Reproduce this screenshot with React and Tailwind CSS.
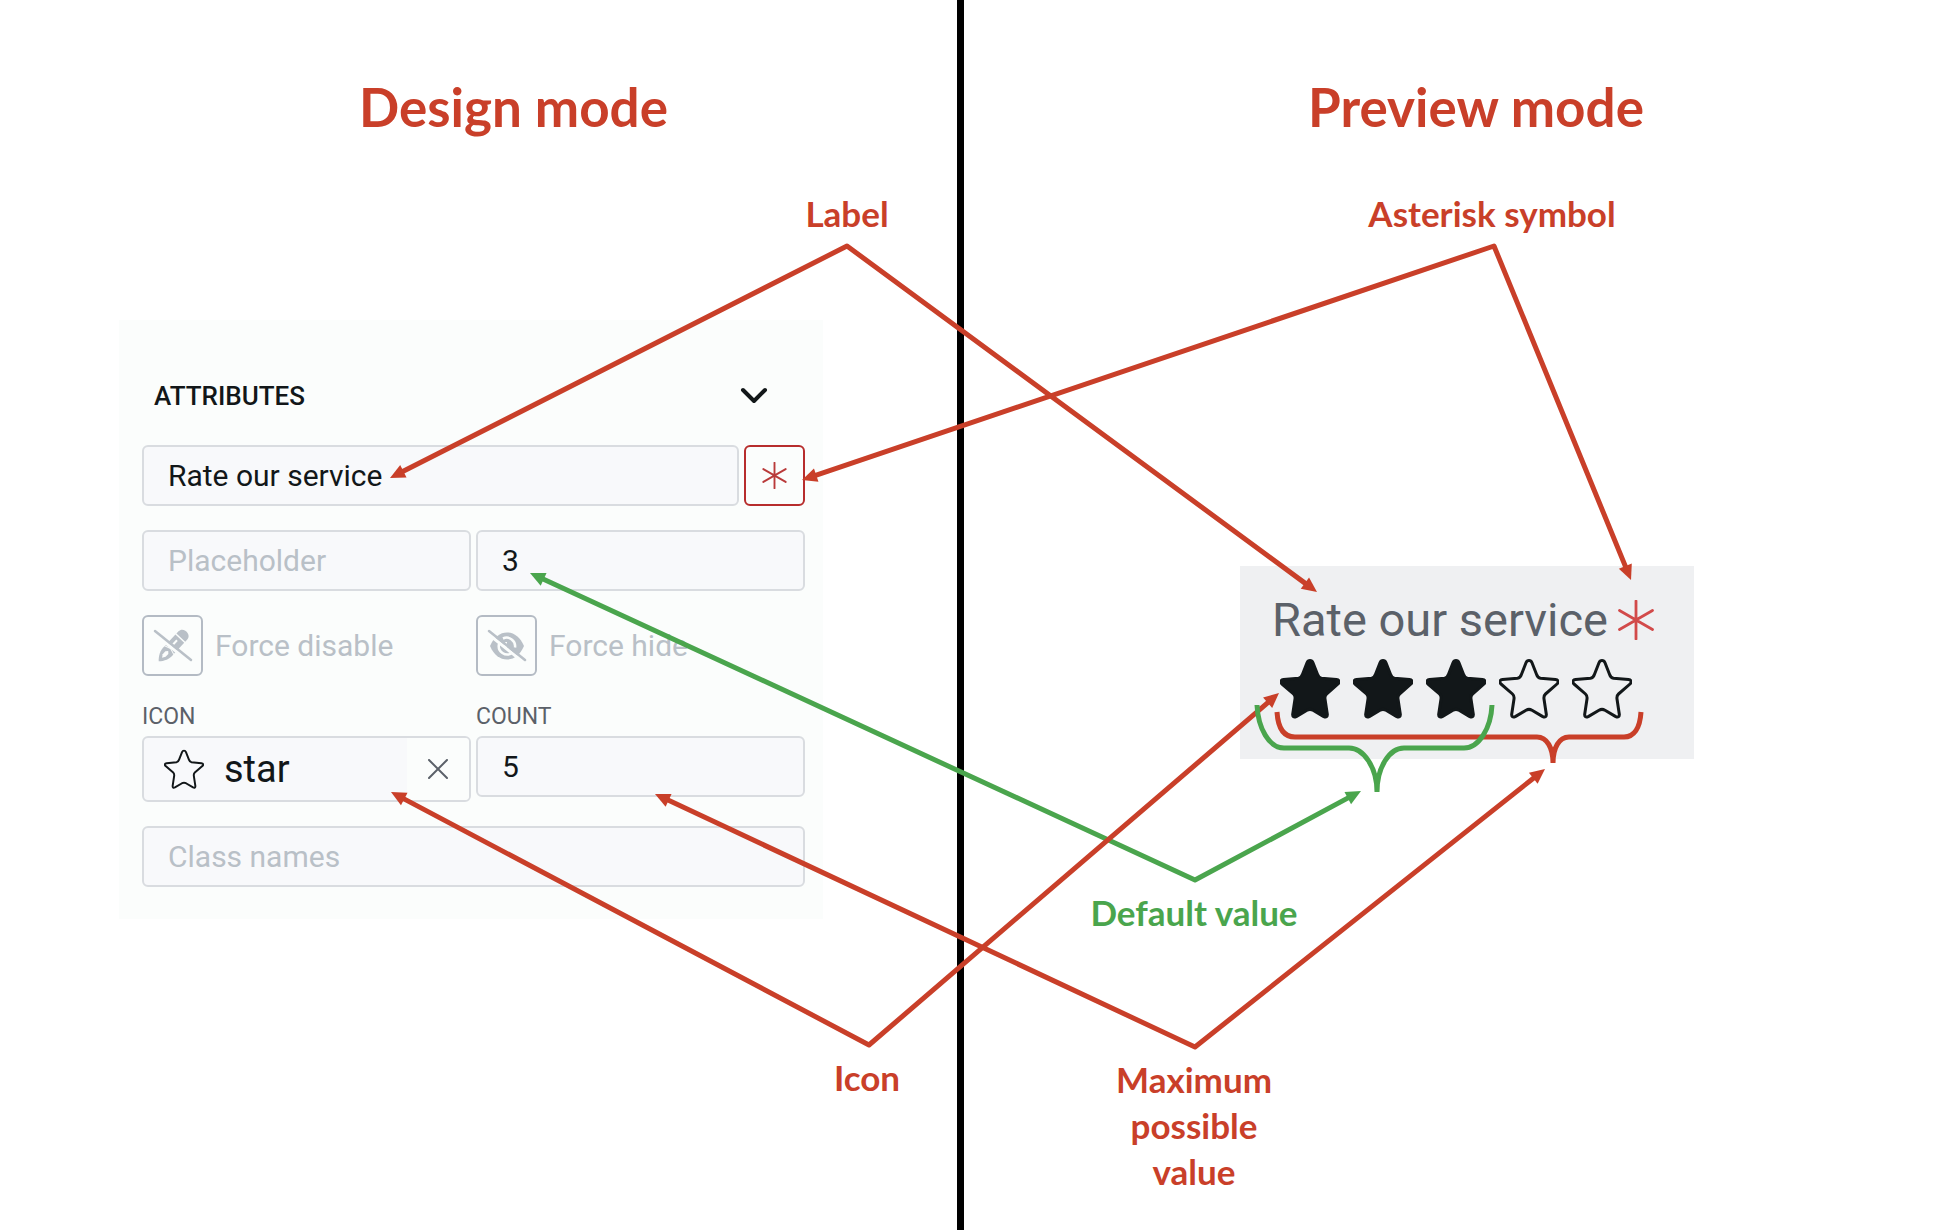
import React from 'react';

const RED = '#c93f29';
const GREEN = '#4aa54d';

const STAR =
  'M30 2.500C31.500 2.500 32.400 3.300 33 4.800L37.500 16.200C38.300 18.600 39.200 19.800 41.500 20.200L56.500 21.600C59.500 22 60 24.200 58 26L46.500 36C44.800 37.500 44.700 38.800 45 41L47.300 56.200C47.600 59 46 59.600 43.800 58.600L33 52.200C30.800 51 29.200 51 27 52.200L16.200 58.600C14 59.600 12.400 59 12.700 56.200L15 41C15.300 38.800 15.200 37.500 13.500 36L2 26C0 24.200 .5 22 3.500 21.600L18.500 20.200C20.800 19.800 21.700 18.600 22.500 16.200L27 4.800C27.600 3.300 28.500 2.500 30 2.500Z';

function Star({ filled = false, className }) {
  return (
    <svg
      viewBox="0 0 60 61"
      className={className}
      fill={filled ? '#121719' : 'none'}
      stroke="#121719"
      strokeWidth="3"
      strokeLinejoin="round"
      aria-hidden="true"
    >
      <path d={STAR} />
    </svg>
  );
}

function Asterisk({ className, weight }) {
  return (
    <svg viewBox="0 0 40 40" className={className} fill="none" stroke="currentColor" strokeWidth={weight} strokeLinecap="round" aria-hidden="true">
      <path d="M20 1v38M3.500 10.500l33 19M36.500 10.500l-33 19" />
    </svg>
  );
}

function PencilSlash() {
  return (
    <svg viewBox="0 0 40 40" className="size-10" aria-hidden="true">
      <g transform="translate(20 20) rotate(43)" fill="#b9c0c7">
        <path d="M-6-11.500v-3c0-7 12-7 12 0v3z" />
        <path d="M-6-10h12V5L0 3l-6 2z" />
        <path d="M-6 6l6-2 6 2c.5 6-2 11-6 15-4-4-6.500-9-6-15z" />
        <path d="M-2-7h2v8h-2z" fill="#fbfdfc" />
        <path d="M-2 9l2-2 2 2v4l-2 3-2-3z" fill="#fbfdfc" />
      </g>
      <path d="M3 9l32 26" stroke="#fbfdfc" strokeWidth="3" />
      <path d="M2 5l36 29" stroke="#b9c0c7" strokeWidth="2.500" strokeLinecap="round" />
    </svg>
  );
}

function EyeSlash() {
  return (
    <svg viewBox="0 0 40 40" className="size-10" aria-hidden="true">
      <path d="M3 20C7 11 13 6.500 20 6.500S33 11 37 20c-4 9-10 13.500-17 13.500S7 29 3 20z" fill="#b9c0c7" />
      <path d="M16 12.500a8.500 8.500 0 0 1 12 9M25 27a8.500 8.500 0 0 1-13-9" fill="none" stroke="#fbfdfc" strokeWidth="2.500" />
      <path d="M19 16v4h-4" fill="none" stroke="#fbfdfc" strokeWidth="2" />
      <path d="M0 7l36 29" stroke="#fbfdfc" strokeWidth="3" />
      <path d="M2 5l36 29" stroke="#b9c0c7" strokeWidth="2.500" strokeLinecap="round" />
    </svg>
  );
}

const FIELD =
  'w-full min-w-0 rounded-md border-2 border-[#d9dce0] bg-[#f8f9fb] px-6 text-[30px] text-[#121719] placeholder:text-[#b9c0c7] outline-none';

function AttributesPanel() {
  return (
    <form className="ml-[119px] w-[704px] bg-[#fbfdfc] pt-[54px] pr-[18px] pb-8 pl-[23px] font-[Roboto,sans-serif] text-[30px]">
      <div className="mb-[27px] flex h-11 items-center justify-between pr-[37px] pl-3">
        <h2 className="text-[26px] font-medium text-[#121719]">ATTRIBUTES</h2>
        <button type="button" aria-label="Collapse attributes">
          <svg viewBox="0 0 28 18" className="h-[18px] w-7" fill="none" stroke="#121719" strokeWidth="4" strokeLinecap="round" strokeLinejoin="round" aria-hidden="true">
            <path d="M3 3l11 11L25 3" />
          </svg>
        </button>
      </div>

      <div className="mb-6 flex gap-[5px]">
        <input aria-label="Label" defaultValue="Rate our service" className={`${FIELD} h-[61px]`} />
        <button type="button" aria-label="Required" className="flex size-[61px] shrink-0 items-center justify-center rounded-md border-2 border-[#b72d2d] text-[#b93a3a]">
          <Asterisk className="size-[27px]" weight={2.8} />
        </button>
      </div>

      <div className="mb-6 grid grid-cols-2 gap-[5px]">
        <input aria-label="Placeholder" placeholder="Placeholder" className={`${FIELD} h-[61px]`} />
        <input aria-label="Default value" defaultValue="3" className={`${FIELD} h-[61px]`} />
      </div>

      <div className="mb-6 grid grid-cols-2 gap-[5px] text-[#b9c0c7]">
        <button type="button" className="flex items-center gap-3">
          <span className="flex size-[61px] items-center justify-center rounded-md border-2 border-[#b4bbc4]">
            <PencilSlash />
          </span>
          Force disable
        </button>
        <button type="button" className="flex items-center gap-3">
          <span className="flex size-[61px] items-center justify-center rounded-md border-2 border-[#b4bbc4]">
            <EyeSlash />
          </span>
          Force hide
        </button>
      </div>

      <div className="mb-6 grid grid-cols-2 items-start gap-[5px]">
        <div>
          <label htmlFor="icon" className="block h-9 text-[23px] leading-[34px] text-[#5b6169]">ICON</label>
          <div className="flex h-[66px] overflow-hidden rounded-md border-2 border-[#d9dce0] bg-[#f8f9fb]">
            <Star className="mt-[11px] ml-5 size-10 shrink-0" />
            <input id="icon" defaultValue="star" className="w-0 grow bg-transparent pl-5 text-[38px] text-[#121719] outline-none" />
            <button type="button" aria-label="Clear icon" className="flex w-[62px] items-center justify-center bg-[#fbfdfc]">
              <svg viewBox="0 0 20 20" className="size-5" stroke="#5b6169" strokeWidth="2" strokeLinecap="round" aria-hidden="true">
                <path d="M1 1l18 18M19 1L1 19" />
              </svg>
            </button>
          </div>
        </div>
        <div>
          <label htmlFor="count" className="block h-9 text-[23px] leading-[34px] text-[#5b6169]">COUNT</label>
          <input id="count" defaultValue="5" className={`${FIELD} block h-[61px]`} />
        </div>
      </div>

      <input aria-label="Class names" placeholder="Class names" className={`${FIELD} block h-[61px]`} />
    </form>
  );
}

function PreviewCard() {
  return (
    <div className="ml-[276px] w-[454px] bg-[#eff0f2] pt-6 pb-10 pl-8 font-[Roboto,sans-serif]">
      <div className="flex items-center gap-2 text-[47px] leading-[60px] text-[#5b6169]">
        Rate our service
        <Asterisk className="size-10 text-[#d24a4a]" weight={2.8} />
      </div>
      <div className="mt-2 flex gap-[13px] pl-2">
        {[1, 2, 3, 4, 5].map((n) => (
          <button key={n} type="button" aria-label={`${n} stars`}>
            <Star filled={n <= 3} className="h-[61px] w-[60px]" />
          </button>
        ))}
      </div>
    </div>
  );
}

/* Each connector runs tip → elbow → tip. */
const CONNECTORS = [
  { color: RED, a: [390, 478], m: [847, 246], b: [1317, 592] },
  { color: RED, a: [802, 480], m: [1494, 246], b: [1631, 580] },
  { color: GREEN, a: [530, 573], m: [1195, 880], b: [1361, 791] },
  { color: RED, a: [391, 792], m: [869, 1045], b: [1279, 693] },
  { color: RED, a: [655, 794], m: [1195, 1047], b: [1545, 769] },
];

function shorten([tx, ty], [mx, my], by) {
  const d = Math.hypot(mx - tx, my - ty);
  return [tx + ((mx - tx) * by) / d, ty + ((my - ty) * by) / d];
}

function head(tip, from) {
  const [bx, by] = shorten(tip, from, 15);
  const nx = ((tip[1] - by) / 15) * 7;
  const ny = ((bx - tip[0]) / 15) * 7;
  return `${tip} ${bx + nx},${by + ny} ${bx - nx},${by - ny}`;
}

function Connectors() {
  return (
    <svg className="pointer-events-none absolute inset-0 h-full w-full overflow-visible" fill="none" aria-hidden="true">
      {CONNECTORS.map(({ color, a, m, b }) => (
        <g key={a.join()}>
          <polyline points={`${shorten(a, m, 12)} ${m} ${shorten(b, m, 12)}`} stroke={color} strokeWidth="5" strokeLinejoin="round" />
          <polygon points={head(a, m)} fill={color} />
          <polygon points={head(b, m)} fill={color} />
        </g>
      ))}
      <path d="M1277 712C1278 728 1284 737 1295 737H1537C1547 737 1553 748 1553 763C1553 748 1559 737 1569 737H1624C1634 737 1640 728 1641 712" stroke={RED} strokeWidth="5" />
      <path d="M1257 705C1258 728 1269 748 1284 748H1349C1364 748 1377 768 1377 792C1377 768 1389 748 1404 748H1464C1479 748 1491 728 1492 705" stroke={GREEN} strokeWidth="5" />
    </svg>
  );
}

const NOTE = 'absolute -translate-x-1/2 whitespace-nowrap text-center text-[35px] leading-[46px] font-bold';

export default function App() {
  return (
    <main className="relative grid min-h-screen grid-cols-[957px_7px_1fr] overflow-hidden bg-white font-[Lato,sans-serif]">
      <section>
        <h1 className="mt-[75px] mb-[181px] pl-[70px] text-center text-[53px] leading-[64px] font-bold text-[#c93f29]">Design mode</h1>
        <AttributesPanel />
      </section>
      <div className="bg-black" />
      <section>
        <h1 className="mt-[75px] mb-[427px] pl-[52px] text-center text-[53px] leading-[64px] font-bold text-[#c93f29]">Preview mode</h1>
        <PreviewCard />
      </section>

      <Connectors />
      <p className={`${NOTE} top-[190px] left-[847px] text-[#c93f29]`}>Label</p>
      <p className={`${NOTE} top-[190px] left-[1492px] text-[#c93f29]`}>Asterisk symbol</p>
      <p className={`${NOTE} top-[889px] left-[1194px] text-[#4aa54d]`}>Default value</p>
      <p className={`${NOTE} top-[1054px] left-[867px] text-[#c93f29]`}>Icon</p>
      <p className={`${NOTE} top-[1056px] left-[1194px] text-[#c93f29]`}>
        Maximum
        <br />
        possible
        <br />
        value
      </p>
    </main>
  );
}
